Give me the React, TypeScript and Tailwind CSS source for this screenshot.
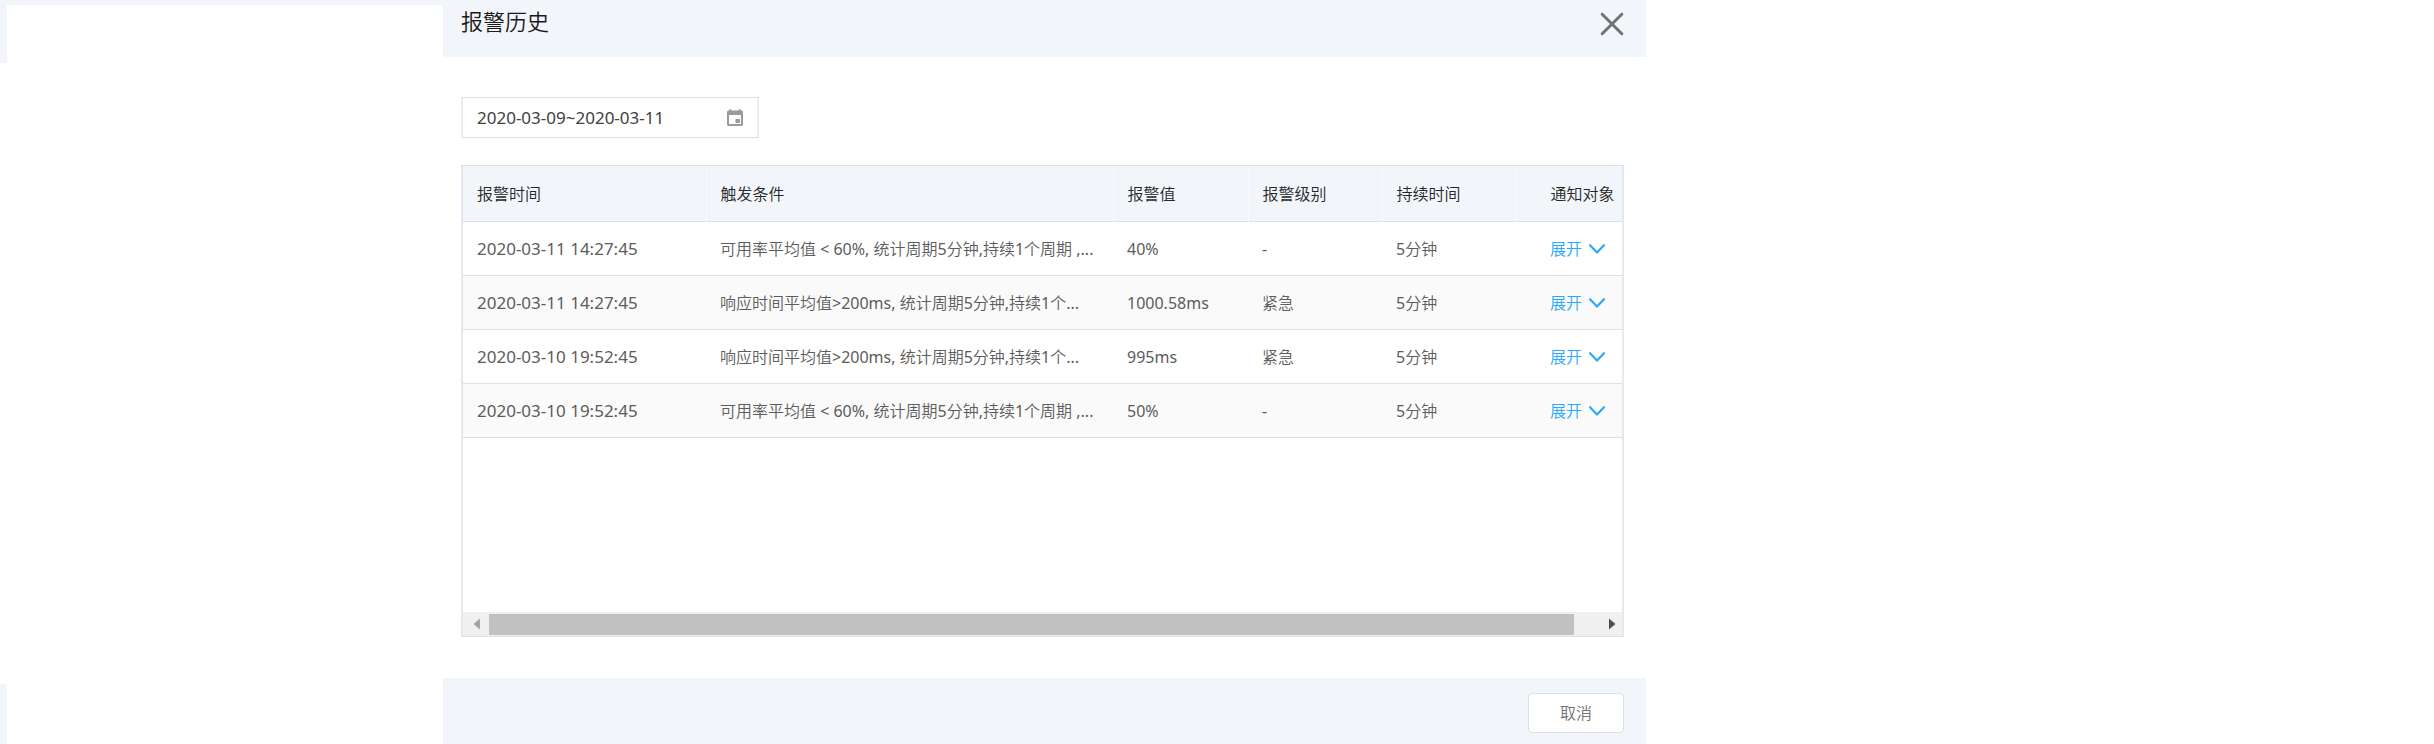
import { useState } from "react";

type Alarm = {
  id: number;
  time: string;
  condition: string;
  value: string;
  level: string;
  duration: string;
};

const alarms: Alarm[] = [
  { id: 1, time: "2020-03-11 14:27:45", condition: "可用率平均值 < 60%, 统计周期5分钟,持续1个周期 ,...", value: "40%", level: "-", duration: "5分钟" },
  { id: 2, time: "2020-03-11 14:27:45", condition: "响应时间平均值>200ms, 统计周期5分钟,持续1个...", value: "1000.58ms", level: "紧急", duration: "5分钟" },
  { id: 3, time: "2020-03-10 19:52:45", condition: "响应时间平均值>200ms, 统计周期5分钟,持续1个...", value: "995ms", level: "紧急", duration: "5分钟" },
  { id: 4, time: "2020-03-10 19:52:45", condition: "可用率平均值 < 60%, 统计周期5分钟,持续1个周期 ,...", value: "50%", level: "-", duration: "5分钟" },
];

const headers = ["报警时间", "触发条件", "报警值", "报警级别", "持续时间"];

function CloseIcon() {
  return (
    <svg className="size-6" viewBox="0 0 24 24" fill="none" stroke="#737373" strokeWidth="3" strokeLinecap="round" aria-hidden="true">
      <path d="M2.200 2.200 21.800 21.800M21.800 2.200 2.200 21.800" />
    </svg>
  );
}

function CalendarIcon() {
  return (
    <svg className="h-[18px] w-4" viewBox="0 0 16 18" aria-hidden="true">
      <path
        fill="#9a9a9a"
        fillRule="evenodd"
        d="M2 0.500h2.500V1.500h7V0.500h2.500V1.500h0.500A1.500 1.500 0 0 1 16 3v12.500a1.500 1.500 0 0 1-1.500 1.500h-13A1.500 1.500 0 0 1 0 15.500V3A1.500 1.500 0 0 1 1.500 1.500H2ZM2 6v9h12V6Z"
      />
      <path fill="#9a9a9a" d="M8.500 10H13v4H8.500Z" />
    </svg>
  );
}

function ChevronIcon() {
  return (
    <svg className="h-2.5 w-4" viewBox="0 0 16 10" fill="none" stroke="#2ba8f8" strokeWidth="2.2" strokeLinecap="round" strokeLinejoin="round" aria-hidden="true">
      <path d="M1 1.200 8 8.500 15 1.200" />
    </svg>
  );
}

function AlarmTable() {
  return (
    <table className="w-full table-fixed border-collapse text-left text-base">
      <colgroup>
        <col className="w-[243px]" />
        <col />
        <col className="w-[135px]" />
        <col className="w-[134px]" />
        <col className="w-[134px]" />
        <col className="w-[106px]" />
      </colgroup>
      <thead>
        <tr className="h-[55px] border-b border-[#d9e1e9] bg-[#f2f6fb] text-[#262626]">
          {headers.map((h) => (
            <th key={h} className="border-r border-[#f8fafd] pt-0.5 pl-3.5 font-normal whitespace-nowrap">{h}</th>
          ))}
          <th className="pt-0.5 pl-[34px] font-normal whitespace-nowrap">通知对象</th>
        </tr>
      </thead>
      <tbody className="text-[#5c5c5c]">
        {alarms.map((a) => (
          <tr key={a.id} className="h-[54px] border-b border-[#d9e1e9] even:bg-[#fafafa]">
            <td className="pt-0.5 pl-3.5 text-[17px] whitespace-nowrap">{a.time}</td>
            <td className="pt-0.5 pl-3.5 whitespace-nowrap">{a.condition}</td>
            <td className="pt-0.5 pl-3.5 whitespace-nowrap">{a.value}</td>
            <td className="pt-0.5 pl-3.5 whitespace-nowrap">{a.level}</td>
            <td className="pt-0.5 pl-3.5 whitespace-nowrap">{a.duration}</td>
            <td className="pt-0.5 pl-[34px]">
              <button type="button" className="flex items-center gap-[7px] whitespace-nowrap text-[#2ba8f8]">
                展开
                <ChevronIcon />
              </button>
            </td>
          </tr>
        ))}
      </tbody>
    </table>
  );
}

function ScrollBar() {
  return (
    <div className="flex h-6 items-center bg-[#f0f0f0]">
      <button type="button" aria-label="向左滚动" className="flex w-[26px] justify-center">
        <svg className="h-3 w-[7px]" viewBox="0 0 7 12" aria-hidden="true"><path d="M7 0.500V11.500L0.500 6Z" fill="#a3a3a3" /></svg>
      </button>
      <div className="mr-7 h-[21px] flex-1 bg-[#c1c1c1]" />
      <button type="button" aria-label="向右滚动" className="flex w-5 justify-center">
        <svg className="h-3 w-[7px]" viewBox="0 0 7 12" aria-hidden="true"><path d="M0 0.500V11.500L6.500 6Z" fill="#505050" /></svg>
      </button>
    </div>
  );
}

export default function App() {
  const [range, setRange] = useState("2020-03-09~2020-03-11");

  return (
    <div className="grid min-h-screen grid-cols-[443fr_1203fr_788fr] bg-white font-['Noto_Sans','Noto_Sans_CJK_SC_DemiLight','Noto_Sans_CJK_SC_Light','Noto_Sans_CJK_SC',sans-serif]">
      <div className="flex flex-col justify-between border-t-[5px] border-[#f2f6fb]">
        <div className="h-[58px] w-[7px] bg-[#f2f6fb]" />
        <div className="h-[60px] w-[7px] bg-[#f2f6fb]" />
      </div>

      <section role="dialog" aria-labelledby="history-title" className="flex min-w-0 flex-col">
        <header className="flex h-[57px] items-start justify-between bg-[#f2f6fb] pt-[5px] pr-[22px] pl-[18px]">
          <h1 id="history-title" className="text-[22px] leading-8 font-normal text-[#1a1a1a]">报警历史</h1>
          <button type="button" aria-label="关闭" className="pt-[7px]">
            <CloseIcon />
          </button>
        </header>

        <main className="flex flex-1 flex-col gap-[27px] px-[18px] pt-10 pb-[41px]">
          <div className="flex h-[41px] w-[298px] items-center border border-x-2 border-x-[#e8eef3] border-y-[#d9e1e9] pr-[14px] pl-[14px]">
            <input
              aria-label="日期范围"
              value={range}
              onChange={(e) => setRange(e.target.value)}
              className="min-w-0 flex-1 bg-transparent text-[17px] text-[#404040] outline-none"
            />
            <CalendarIcon />
          </div>

          <div className="mr-1 flex flex-1 flex-col justify-between border border-x-2 border-x-[#e2e9ef] border-y-[#d9e1e9]">
            <AlarmTable />
            <ScrollBar />
          </div>
        </main>

        <footer className="flex h-[66px] items-start justify-end bg-[#f2f6fb] pt-[15px] pr-[22px]">
          <button type="button" className="h-10 w-24 rounded-sm border border-[#d9e1e9] bg-white text-base text-[#737373]">
            取消
          </button>
        </footer>
      </section>
    </div>
  );
}
